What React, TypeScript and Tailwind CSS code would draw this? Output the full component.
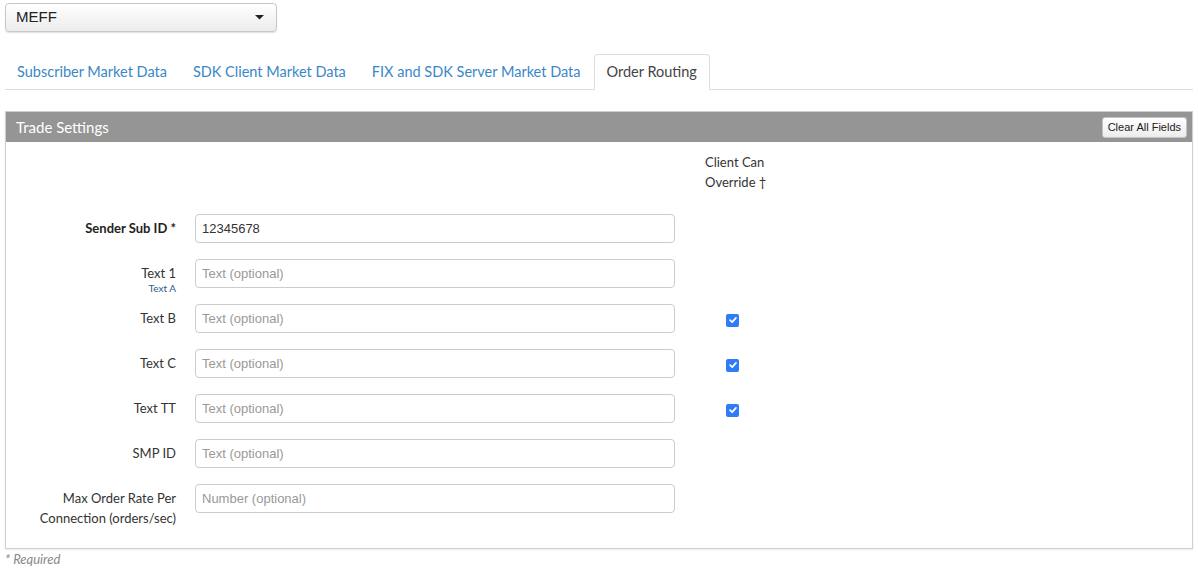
import { useState } from "react";

const rows = [
  { label: "Sender Sub ID *", bold: true, value: "12345678", placeholder: "", check: null },
  { label: "Text 1", sub: "Text A", placeholder: "Text (optional)", check: null },
  { label: "Text B", placeholder: "Text (optional)", check: true },
  { label: "Text C", placeholder: "Text (optional)", check: true },
  { label: "Text TT", placeholder: "Text (optional)", check: true },
  { label: "SMP ID", placeholder: "Text (optional)", check: null },
  { label: "Max Order Rate Per Connection (orders/sec)", placeholder: "Number (optional)", check: null },
];

const tabs = ["Subscriber Market Data", "SDK Client Market Data", "FIX and SDK Server Market Data", "Order Routing"];

const Check = () => (
  <span className="flex size-[13px] items-center justify-center rounded-[2px] bg-[#2f7cf6]">
    <svg viewBox="0 0 12 12" className="size-[10px]">
      <path d="M2.5 6.2 L5 8.6 L9.6 3.4" fill="none" stroke="white" strokeWidth="2" strokeLinecap="round" strokeLinejoin="round" />
    </svg>
  </span>
);

export default function App() {
  const [active] = useState(3);
  return (
    <div className="w-[1198px] h-[568px] bg-white text-[#333] font-['Lato',sans-serif] overflow-hidden">
      <div className="px-[5px] pt-[3px]">
        <div className="flex h-[29px] w-[272px] items-center justify-between rounded-[4px] border border-[#c8c8c8] bg-gradient-to-b from-[#ffffff] to-[#ececec] px-[10px] shadow-[0_1px_1px_rgba(0,0,0,0.12)]">
          <span className="text-[15px] text-[#222] font-['Liberation_Sans',sans-serif]">MEFF</span>
          <svg viewBox="0 0 10 6" className="mr-[2px] w-[9px]">
            <path d="M0 0 L10 0 L5 5 Z" fill="#222" />
          </svg>
        </div>

        <div className="mt-[22px] flex h-[36px] border-b border-[#dddddd]">
          <div className="flex -ml-[1px]">
            {tabs.map((t, i) =>
              i === active ? (
                <div key={t} className="-mb-px flex items-center rounded-t-[4px] border border-b-white border-[#dddddd] bg-white px-[12px] text-[14.5px] text-[#444]">
                  {t}
                </div>
              ) : (
                <div key={t} className="flex items-center px-[13px] text-[14.5px] text-[#3a87c8]">
                  {t}
                </div>
              )
            )}
          </div>
        </div>

        <div className="mt-[21px] border border-[#cfcfcf] shadow-[0_1px_2px_rgba(0,0,0,0.08)]">
          <div className="flex h-[30px] items-center justify-between bg-[#959595] pl-[10px] pr-[5px]">
            <span className="text-[15px] text-white">Trade Settings</span>
            <button className="h-[21px] rounded-[3px] border border-[#c4c4c4] bg-gradient-to-b from-white to-[#ededed] px-[5px] text-[11px] text-[#222] font-['Liberation_Sans',sans-serif]">
              Clear All Fields
            </button>
          </div>

          <div className="pb-[35px]">
            <div className="flex h-[72px] pt-[10px]">
              <div className="ml-[699px] text-[13px] leading-[20px] text-[#333]">
                Client Can
                <br />
                Override †
              </div>
            </div>
            <div className="flex flex-col gap-[16px]">
              {rows.map((r) => (
                <div key={r.label} className="flex h-[29px] items-start">
                  <div className="w-[170px] pt-[4px] text-right text-[13px] leading-[20px]">
                    <div className={r.bold ? "font-bold text-[#222]" : "text-[#333]"}>{r.label}</div>
                    {r.sub && <div className="-mt-[2px] text-[10px] leading-[14px] text-[#2a5d8c]">{r.sub}</div>}
                  </div>
                  <input
                    className="ml-[19px] h-[29px] w-[480px] shrink-0 rounded-[4px] border border-[#cccccc] px-[6px] text-[13px] text-[#333] placeholder:text-[#999] font-['Liberation_Sans',sans-serif] outline-none"
                    defaultValue={r.value}
                    placeholder={r.placeholder}
                  />
                  <div className="ml-[51px] flex h-[29px] items-center pt-[3px]">{r.check && <Check />}</div>
                </div>
              ))}
            </div>
          </div>
        </div>
        <div className="mt-[1px] text-[13px] italic text-[#888]">* Required</div>
      </div>
    </div>
  );
}
